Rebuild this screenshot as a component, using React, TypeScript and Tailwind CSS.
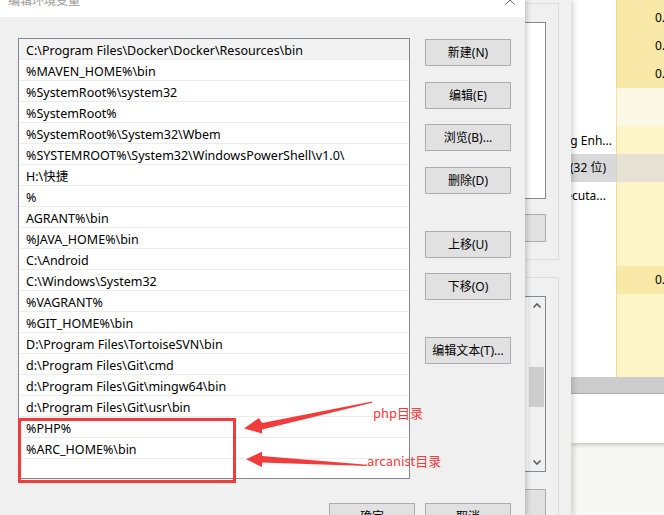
import React from "react";

const PATHS = [
  "C:\\Program Files\\Docker\\Docker\\Resources\\bin",
  "%MAVEN_HOME%\\bin",
  "%SystemRoot%\\system32",
  "%SystemRoot%",
  "%SystemRoot%\\System32\\Wbem",
  "%SYSTEMROOT%\\System32\\WindowsPowerShell\\v1.0\\",
  "H:\\快捷",
  "%",
  "AGRANT%\\bin",
  "%JAVA_HOME%\\bin",
  "C:\\Android",
  "C:\\Windows\\System32",
  "%VAGRANT%",
  "%GIT_HOME%\\bin",
  "D:\\Program Files\\TortoiseSVN\\bin",
  "d:\\Program Files\\Git\\cmd",
  "d:\\Program Files\\Git\\mingw64\\bin",
  "d:\\Program Files\\Git\\usr\\bin",
  "%PHP%",
  "%ARC_HOME%\\bin",
];

const BTN =
  "flex h-[27px] w-[86px] shrink-0 items-center justify-center border border-[#adadad] bg-[#e1e1e1] pt-[1px] text-[12px] leading-none text-black";

const SIDE_BUTTONS = [
  { label: "新建(N)", mt: "mt-0" },
  { label: "编辑(E)", mt: "mt-[16px]" },
  { label: "浏览(B)...", mt: "mt-[15px]" },
  { label: "删除(D)", mt: "mt-[16px]" },
  { label: "上移(U)", mt: "mt-[37px]" },
  { label: "下移(O)", mt: "mt-[15px]" },
  { label: "编辑文本(T)...", mt: "mt-[37px]" },
];

function Chevron({ down }: { down?: boolean }) {
  return (
    <svg width="8" height="5" viewBox="0 0 8 5" className={down ? "rotate-180" : ""}>
      <path d="M0.5 4.5L4 1L7.5 4.5" fill="none" stroke="#606060" strokeWidth="1.6" />
    </svg>
  );
}

export default function App() {
  return (
    <div
      className="relative flex h-[515px] w-[664px] overflow-hidden bg-white text-black"
      style={{ fontFamily: '"Noto Sans", "Noto Sans CJK SC", sans-serif' }}
    >
      {/* Edit environment variable dialog */}
      <div className="relative z-20 flex w-[525px] shrink-0 flex-col bg-[#f0f0f0] shadow-[2px_0_5px_rgba(0,0,0,0.2)]">
        <div className="flex h-[17px] shrink-0 items-start justify-between bg-white pl-[8px] pr-[10px]">
          <span className="-mt-[5px] text-[12px] leading-none text-[#9a9a9a]">编辑环境变量</span>
          <svg className="-mt-[5px]" width="10" height="10" viewBox="0 0 10 10">
            <path d="M0.5 0.5L9.5 9.5M9.5 0.5L0.5 9.5" stroke="#666" strokeWidth="1" />
          </svg>
        </div>

        <div className="flex flex-1 flex-col pl-[18px] pr-[14px] pt-[21px]">
          <div className="flex gap-[15px]">
            {/* path list */}
            <div className="flex h-[441px] w-[392px] shrink-0 flex-col overflow-hidden border border-[#828790] bg-white">
              {PATHS.map((p, i) => (
                <div
                  key={i}
                  className={`flex h-[21px] shrink-0 items-center border-b border-[#ececec] pl-[7px] pt-[4px] text-[12.5px] leading-none whitespace-nowrap ${
                    i === 0 ? "bg-[#f3f3f3]" : ""
                  }`}
                >
                  {p}
                </div>
              ))}
              <div className="flex-1" />
            </div>

            {/* buttons */}
            <div className="flex flex-col pt-[1px]">
              {SIDE_BUTTONS.map((b) => (
                <div key={b.label} className={`${BTN} ${b.mt}`}>
                  {b.label}
                </div>
              ))}
            </div>
          </div>

          <div className="mt-[24px] flex justify-end gap-[10px]">
            <div className={BTN}>确定</div>
            <div className={BTN}>取消</div>
          </div>
        </div>
      </div>

      {/* Environment variables window behind */}
      <div className="relative z-10 flex w-[46px] shrink-0 bg-[#f0f0f0] shadow-[3px_0_5px_rgba(0,0,0,0.15)]">
        <div className="flex w-[34px] flex-col">
          <div className="mt-[3px] flex h-[257px] shrink-0 flex-col border-y border-r border-[#dcdcdc] pr-[12px]">
            <div className="mt-[18px] h-[177px] shrink-0 border-y border-r border-[#828790] bg-white" />
            <div className="mt-[15px] h-[28px] shrink-0 border-y border-r border-[#adadad] bg-[#e1e1e1]" />
          </div>
          <div className="mt-[17px] flex flex-1 flex-col border-t border-r border-[#dcdcdc] pr-[12px]">
            <div className="mt-[18px] flex h-[176px] shrink-0 justify-end border-y border-r border-[#828790] bg-white">
              <div className="flex w-[17px] flex-col items-center bg-[#f0f0f0]">
                <div className="flex h-[17px] items-center justify-center">
                  <Chevron />
                </div>
                <div className="mt-[53px] h-[40px] w-[15px] bg-[#cdcdcd]" />
                <div className="flex-1" />
                <div className="flex h-[17px] items-center justify-center">
                  <Chevron down />
                </div>
              </div>
            </div>
            <div className="mt-[17px] h-[28px] shrink-0 border-y border-r border-[#adadad] bg-[#e1e1e1]" />
          </div>
        </div>
      </div>

      {/* Task manager style window at the back */}
      <div className="flex flex-1 flex-col bg-[#f7f7f3] text-[12px] leading-none">
        <div className="flex h-[377px] shrink-0 flex-col bg-white">
          <div className="flex h-[88px] shrink-0">
            <div className="w-[45px] shrink-0" />
            <div className="flex flex-1 flex-col border-l border-[#efd98f] bg-[#f9e9a9] pt-[4px] pl-[38px]">
              {[0, 1, 2].map((k) => (
                <div key={k} className="flex h-[28px] items-center whitespace-nowrap">
                  0.0%
                </div>
              ))}
            </div>
          </div>
          <div className="flex h-[38px] shrink-0">
            <div className="w-[45px] shrink-0" />
            <div className="flex-1 border-l border-[#f3e3a8] bg-[#fdf7e5]" />
          </div>
          <div className="flex h-[28px] shrink-0">
            <div className="flex w-[45px] shrink-0 items-center justify-end overflow-hidden whitespace-nowrap pr-[4px] pt-[2px]">
              Debugging Enh...
            </div>
            <div className="flex-1 border-l border-[#efd98f] bg-[#fdf4c8]" />
          </div>
          <div className="flex h-[28px] shrink-0">
            <div className="flex w-[45px] shrink-0 items-center justify-end overflow-hidden whitespace-nowrap bg-[#d9d9d9] pr-[10px]">
              Office (32 位)
            </div>
            <div className="flex-1 border-l border-[#d6d3c4] bg-[#e5e2d3]" />
          </div>
          <div className="flex h-[28px] shrink-0">
            <div className="flex w-[45px] shrink-0 items-center justify-end overflow-hidden whitespace-nowrap pr-[10px]">
              Service Executa...
            </div>
            <div className="flex-1 border-l border-[#efd98f] bg-[#fdf4c8]" />
          </div>
          <div className="flex h-[56px] shrink-0">
            <div className="w-[45px] shrink-0" />
            <div className="flex-1 border-l border-[#efd98f] bg-[#fdf4c8]" />
          </div>
          <div className="flex h-[28px] shrink-0">
            <div className="w-[45px] shrink-0" />
            <div className="flex flex-1 items-center whitespace-nowrap border-l border-[#efd98f] bg-[#f9e9a9] pl-[38px]">
              0.0%
            </div>
          </div>
          <div className="flex flex-1">
            <div className="w-[45px] shrink-0" />
            <div className="flex-1 border-l border-[#efd98f] bg-[#fdf4c8]" />
          </div>
        </div>
        <div className="h-[17px] shrink-0 border-b border-[#b4b4b4] bg-[#cccccc]" />
        <div className="h-[49px] shrink-0 bg-white shadow-[0_2px_4px_rgba(0,0,0,0.2)]" />
      </div>

      {/* red annotations */}
      <div className="pointer-events-none absolute inset-0 z-30">
        <div className="absolute left-[18px] top-[418px] h-[65px] w-[218px] border-[3px] border-[#f23b3b]" />
        <svg className="absolute left-0 top-0" width="664" height="515" viewBox="0 0 664 515">
          <polygon
            points="372,401.6 262,423 259,418 244,428.5 262,433.5 262,429.5 372,402.8"
            fill="#f23b3b"
          />
          <polygon
            points="367,464.8 262,456 262,451.7 246,459.3 262,467 262,462.5 367,466"
            fill="#f23b3b"
          />
        </svg>
        <div
          className="absolute left-[373px] top-[406px] text-[13px] leading-none text-[#f23b3b]"
          style={{ fontFamily: '"Noto Sans CJK SC", sans-serif' }}
        >
          php目录
        </div>
        <div
          className="absolute left-[367px] top-[454px] text-[13px] leading-none text-[#f23b3b]"
          style={{ fontFamily: '"Noto Sans CJK SC", sans-serif' }}
        >
          arcanist目录
        </div>
      </div>
    </div>
  );
}
